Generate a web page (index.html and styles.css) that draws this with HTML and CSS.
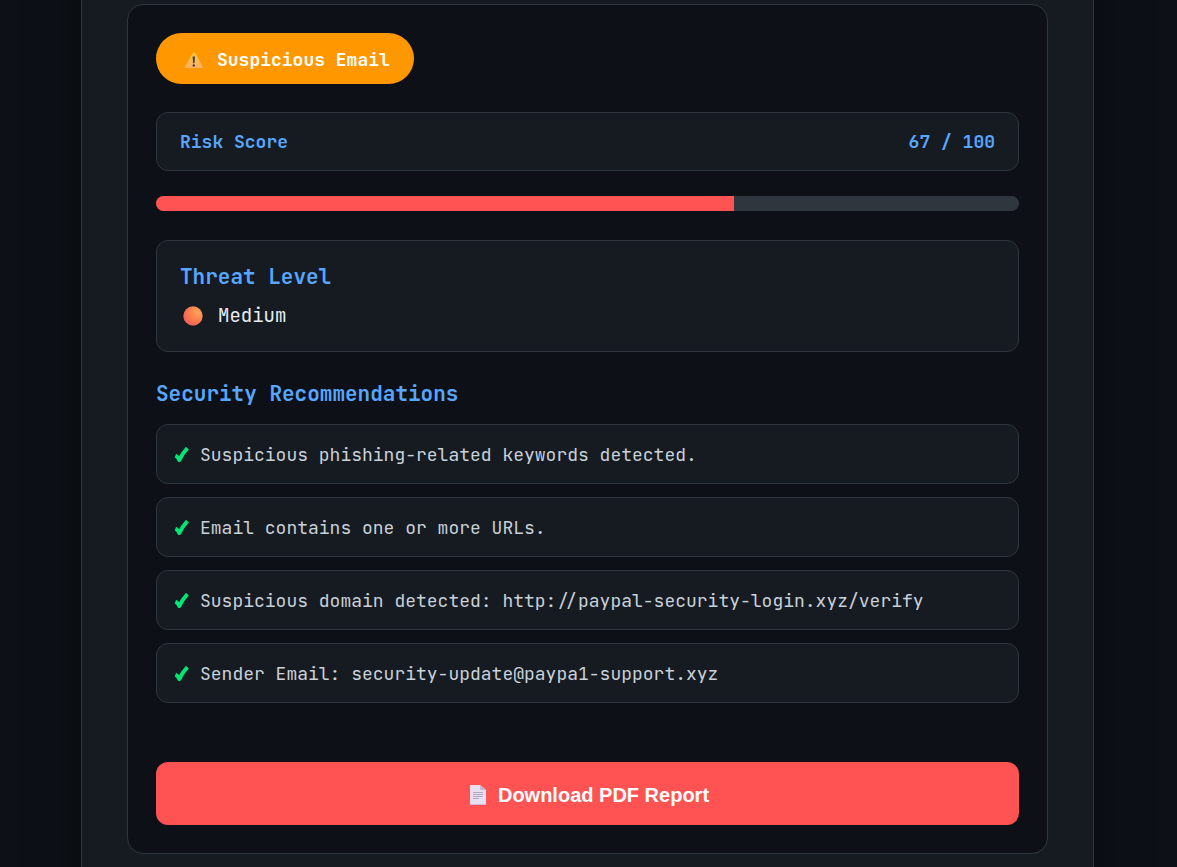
FILE: index.html
```html
<!DOCTYPE html>
<html lang="en">
<head>
    <meta charset="UTF-8">
    <meta name="viewport" content="width=device-width, initial-scale=1.0">
    <title>Email Analysis Result</title>
    <link rel="stylesheet" href="styles.css">
</head>
<body>

    <main class="container">
        <section class="result-box">

            <!-- Verdict badge -->
            <div class="badge">
                <svg class="warning-icon" viewBox="0 0 20 20" aria-hidden="true">
                    <defs>
                        <linearGradient id="warningFill" x1="0" y1="0" x2="0" y2="1">
                            <stop offset="0" stop-color="#ffc83d"/>
                            <stop offset="1" stop-color="#f9b066"/>
                        </linearGradient>
                    </defs>
                    <path d="M8.9 2.9Q10 1.6 11.1 2.9L18.6 16.4Q19.1 18 17.6 18H2Q.5 18 1 16.4Z" fill="url(#warningFill)"/>
                    <path d="M8.6 6.4h2.4l-.5 6.8H9.1Z" fill="#433b4a"/>
                    <circle cx="9.8" cy="15.4" r="1.2" fill="#433b4a"/>
                </svg>
                Suspicious Email
            </div>

            <!-- Score -->
            <div class="score-card">
                <span id="scoreLabel">Risk Score</span>
                <span>67 / 100</span>
            </div>
            <div class="progress" role="progressbar" aria-labelledby="scoreLabel" aria-valuenow="67" aria-valuemin="0" aria-valuemax="100">
                <div class="progress-fill" style="width: 67%"></div>
            </div>

            <!-- Threat level -->
            <div class="threat-card">
                <h3>Threat Level</h3>
                <p>
                    <svg class="level-icon" viewBox="0 0 20 20" aria-hidden="true">
                        <defs>
                            <radialGradient id="levelFill" cx=".75" cy=".3" r=".8">
                                <stop offset="0" stop-color="#ffa65c"/>
                                <stop offset=".6" stop-color="#fb7a4b"/>
                                <stop offset="1" stop-color="#ee5c62"/>
                            </radialGradient>
                        </defs>
                        <circle cx="10" cy="10" r="9.7" fill="url(#levelFill)"/>
                    </svg>
                    Medium
                </p>
            </div>

            <!-- Recommendations -->
            <h3>Security Recommendations</h3>
            <ul class="recommendations">
                <li>
                    <svg class="check-icon" viewBox="0 0 16 16" aria-hidden="true"><path d="M1.4 8.6Q3.6 9.4 5.4 13Q8.6 6.2 13.4 1.2"/></svg>
                    Suspicious phishing-related keywords detected.
                </li>
                <li>
                    <svg class="check-icon" viewBox="0 0 16 16" aria-hidden="true"><path d="M1.4 8.6Q3.6 9.4 5.4 13Q8.6 6.2 13.4 1.2"/></svg>
                    Email contains one or more URLs.
                </li>
                <li>
                    <svg class="check-icon" viewBox="0 0 16 16" aria-hidden="true"><path d="M1.4 8.6Q3.6 9.4 5.4 13Q8.6 6.2 13.4 1.2"/></svg>
                    Suspicious domain detected: http://paypal-security-login.xyz/verify
                </li>
                <li>
                    <svg class="check-icon" viewBox="0 0 16 16" aria-hidden="true"><path d="M1.4 8.6Q3.6 9.4 5.4 13Q8.6 6.2 13.4 1.2"/></svg>
                    Sender Email: security-update@paypa1-support.xyz
                </li>
            </ul>

            <button type="button" class="download-btn">
                <svg class="page-icon" viewBox="0 0 16 20" aria-hidden="true">
                    <path d="M.5 0H10l6 5v14.5q0 .5-.5.5H.5Q0 20 0 19.5V.5Q0 0 .5 0Z" fill="#e8dff0"/>
                    <path d="M10 0l6 5h-5q-1 0-1-1Z" fill="#c5b9d2"/>
                    <path d="M3 7.5h10M3 9.5h10M3 11.5h10M3 13.5h6" stroke="#b3a6c2" stroke-width="1"/>
                    <path d="M0 19.5h16" stroke="#cdbce0"/>
                </svg>
                Download PDF Report
            </button>

        </section>
    </main>

</body>
</html>
```

FILE: styles.css
```css
* {
    margin: 0;
    padding: 0;
    box-sizing: border-box;
}

html {
    overflow: auto;
}

body {
    min-height: 100vh;
    padding: 0 83px 0 81px;
    background: #0d1117;
    color: #e6edf3;
    font-family: 'JetBrains Mono', 'DejaVu Sans Mono', monospace;
    font-size: 18px;
    line-height: 24px;
    overflow: hidden;
}

/* Main card, runs past the top and bottom of the window */
.container {
    margin: -80px 0;
    padding: 83px 45px;
    min-height: calc(100vh + 160px);
    background: #161b22;
    border: 1px solid #30363d;
    box-shadow: 0 0 40px rgba(0, 0, 0, 0.5);
}

.result-box {
    padding: 28px;
    background: #0d1117;
    border: 1px solid #30363d;
    border-radius: 16px;
}

h3 {
    color: #58a6ff;
    font-size: 21px;
    line-height: 28px;
}

svg {
    flex: none;
}

/* Badge */
.badge {
    display: inline-flex;
    align-items: center;
    gap: 13px;
    height: 51px;
    padding: 2px 24px 0 28px;
    background: #ff9800;
    border-radius: 26px;
    color: #fff;
    font-weight: bold;
    vertical-align: top;
}

.warning-icon {
    width: 20px;
    height: 20px;
}

/* Score */
.score-card {
    display: flex;
    justify-content: space-between;
    margin-top: 28px;
    padding: 17px 23px 16px;
    background: #161b22;
    border: 1px solid #30363d;
    border-radius: 12px;
    color: #58a6ff;
    font-weight: bold;
}

.progress {
    height: 15px;
    margin: 25px 0 29px;
    background: #30363d;
    border-radius: 8px;
    overflow: hidden;
}

.progress-fill {
    height: 100%;
    background: #ff5252;
}

/* Threat level */
.threat-card {
    margin-bottom: 28px;
    padding: 22px 23px;
    background: #161b22;
    border: 1px solid #30363d;
    border-radius: 12px;
}

.threat-card p {
    display: flex;
    align-items: center;
    gap: 15px;
    margin-top: 12px;
    padding: 0 3px;
    font-size: 19px;
    line-height: 26px;
}

.level-icon {
    width: 20px;
    height: 20px;
}

/* Recommendations */
.recommendations {
    display: grid;
    gap: 13px;
    margin-top: 16px;
    list-style: none;
}

.recommendations li {
    display: flex;
    align-items: center;
    gap: 10px;
    min-height: 60px;
    padding: 14px 17px 12px;
    background: #161b22;
    border: 1px solid #30363d;
    border-radius: 12px;
    color: #c9d1d9;
}

.check-icon {
    width: 16px;
    height: 16px;
    fill: none;
    stroke: #00e676;
    stroke-width: 4;
    stroke-linejoin: round;
}

/* Download */
.download-btn {
    display: flex;
    align-items: center;
    justify-content: center;
    gap: 12px;
    width: 100%;
    height: 63px;
    margin-top: 59px;
    padding: 3px 0 0 4px;
    background: #ff5252;
    border: none;
    border-radius: 12px;
    color: #fff;
    font-family: Arial, 'Liberation Sans', sans-serif;
    font-size: 20px;
    font-weight: bold;
    cursor: pointer;
}

.download-btn:hover {
    background: #ff6b6b;
}

.page-icon {
    width: 16px;
    height: 20px;
}
```
